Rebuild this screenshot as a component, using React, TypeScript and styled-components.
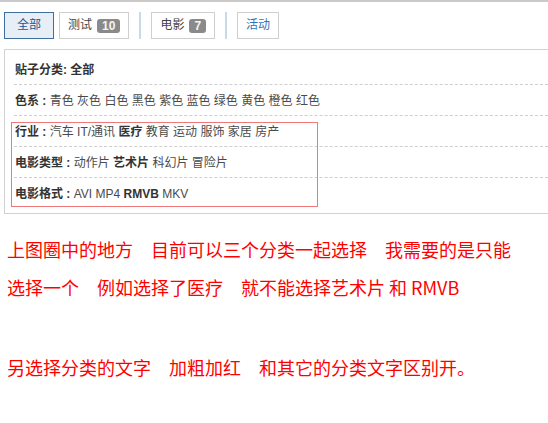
import React from "react";
import styled, { createGlobalStyle } from "styled-components";

const GlobalStyle = createGlobalStyle`
  html, body {
    margin: 0;
    padding: 0;
    background: #fff;
  }
  body {
    font-family: "Liberation Sans", "Noto Sans CJK SC", sans-serif;
    font-size: 12px;
    color: #333;
  }
`;

const Page = styled.div`
  width: 548px;
  border-top: 2px solid #cacaca;
`;

const TabBar = styled.div`
  display: flex;
  align-items: center;
  gap: 5px;
  padding: 10px 4px;
`;

const Tab = styled.div<{ $active?: boolean; $link?: boolean }>`
  display: flex;
  align-items: center;
  gap: 5px;
  height: 25px;
  line-height: 25px;
  padding: 0 ${({ $active }) => ($active ? 12 : 8)}px;
  border: 1px solid ${({ $active }) => ($active ? "#3f6f9f" : "#cfcfcf")};
  background: ${({ $active }) => ($active ? "#e7eef5" : "#fff")};
  color: ${({ $active, $link }) => ($active ? "#1f5593" : $link ? "#2f73b8" : "#444")};
  font-size: 12px;
  cursor: pointer;
`;

const Badge = styled.span`
  display: inline-block;
  height: 14px;
  line-height: 14px;
  padding: 0 5px;
  border-radius: 3px;
  background: #8a8a8a;
  color: #f4f4f4;
  font-weight: 700;
  font-size: 12px;
`;

const Divider = styled.span`
  width: 2px;
  height: 27px;
  margin: 0 5px;
  background: #c8dae8;
`;

const Panel = styled.div`
  margin-left: 4px;
  border-top: 1px solid #d2d2d2;
  border-left: 1px solid #d2d2d2;
  border-bottom: 1px solid #d2d2d2;
  padding: 4px 0 5px 9px;
`;

const Row = styled.div<{ $last?: boolean }>`
  padding: 8px 0 6px 1px;
  line-height: 16px;
  font-size: 12px;
  color: #444;
  border-bottom: ${({ $last }) => ($last ? "none" : "1px dashed #cfcfcf")};
  white-space: pre;
`;

const Label = styled.span`
  font-weight: 700;
  color: #333;
`;

const Item = styled.span<{ $on?: boolean }>`
  font-weight: ${({ $on }) => ($on ? 700 : 400)};
  color: ${({ $on }) => ($on ? "#333" : "#4a4a4a")};
`;

const Marked = styled.div`
  position: relative;

  &::after {
    content: "";
    position: absolute;
    top: 6px;
    left: -3px;
    width: 305px;
    bottom: 1px;
    border: 1.5px solid #f07878;
    pointer-events: none;
  }
`;

const Notes = styled.div`
  padding: 16px 0 0 7px;
  font-family: "Noto Sans CJK SC", sans-serif;
  font-size: 18px;
  color: #ff0000;
`;

const NoteLine = styled.div<{ $gap?: number }>`
  line-height: 38px;
  white-space: pre;
  margin-top: ${({ $gap }) => $gap ?? 0}px;
`;

const FilterRow = ({
  label,
  items,
  on,
  last,
}: {
  label: string;
  items: string[];
  on?: string;
  last?: boolean;
}): JSX.Element => (
  <Row $last={last}>
    <Label>{label} : </Label>
    {items.map((it, i) => (
      <React.Fragment key={it}>
        {i > 0 && " "}
        <Item $on={it === on}>{it}</Item>
      </React.Fragment>
    ))}
  </Row>
);

export default function App(): JSX.Element {
  return (
    <>
      <GlobalStyle />
      <Page>
        <TabBar>
          <Tab $active>全部</Tab>
          <Tab>
            测试<Badge>10</Badge>
          </Tab>
          <Divider />
          <Tab>
            电影<Badge>7</Badge>
          </Tab>
          <Divider />
          <Tab $link>活动</Tab>
        </TabBar>

        <Panel>
          <Row>
            <Label>贴子分类: 全部</Label>
          </Row>
          <FilterRow
            label="色系"
            items={["青色", "灰色", "白色", "黑色", "紫色", "蓝色", "绿色", "黄色", "橙色", "红色"]}
          />
          <Marked>
            <FilterRow
              label="行业"
              items={["汽车", "IT/通讯", "医疗", "教育", "运动", "服饰", "家居", "房产"]}
              on="医疗"
            />
            <FilterRow label="电影类型" items={["动作片", "艺术片", "科幻片", "冒险片"]} on="艺术片" />
            <FilterRow label="电影格式" items={["AVI", "MP4", "RMVB", "MKV"]} on="RMVB" last />
          </Marked>
        </Panel>

        <Notes>
          <NoteLine>上图圈中的地方　目前可以三个分类一起选择　我需要的是只能</NoteLine>
          <NoteLine>选择一个　例如选择了医疗　就不能选择艺术片 和 RMVB</NoteLine>
          <NoteLine $gap={42}>另选择分类的文字　加粗加红　和其它的分类文字区别开。</NoteLine>
        </Notes>
      </Page>
    </>
  );
}
